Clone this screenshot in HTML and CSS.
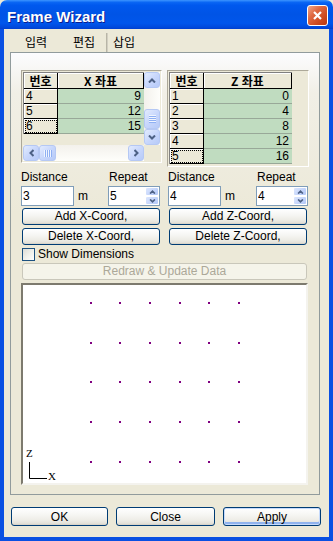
FILE: index.html
```html
<!DOCTYPE html>
<html lang="ko">

<head>
    <meta charset="UTF-8">
    <meta name="viewport" content="width=device-width, initial-scale=1.0">
    <title>Frame Wizard</title>
    <link rel="stylesheet" href="styles.css">
</head>

<body>
    <svg class="defs" width="0" height="0">
        <symbol id="chev-up" viewBox="0 0 8 5"><path d="M1 4.5L4 1.5L7 4.5" fill="none" stroke="#4D6185" stroke-width="2"/></symbol>
        <symbol id="chev-down" viewBox="0 0 8 5"><path d="M1 0.5L4 3.5L7 0.5" fill="none" stroke="#4D6185" stroke-width="2"/></symbol>
        <symbol id="chev-left" viewBox="0 0 5 8"><path d="M4.5 1L1.5 4L4.5 7" fill="none" stroke="#4D6185" stroke-width="2"/></symbol>
        <symbol id="chev-right" viewBox="0 0 5 8"><path d="M0.5 1L3.5 4L0.5 7" fill="none" stroke="#4D6185" stroke-width="2"/></symbol>
    </svg>

    <div class="window">
        <div class="titlebar">
            <span class="title">Frame Wizard</span>
            <button class="close-btn">
                <svg width="13" height="13" viewBox="0 0 13 13"><path d="M3 3L10 10M10 3L3 10" stroke="#fff" stroke-width="2.2"/></svg>
            </button>
        </div>

        <div class="frame">
            <div class="tabs">
                <div class="tab tab-input">입력</div>
                <div class="tab tab-edit">편집</div>
                <div class="tab tab-insert">삽입</div>
            </div>

            <div class="panel">
                <div class="grids">
                    <!-- X coordinates -->
                    <div class="grid-box grid-x">
                        <div class="grid-main">
                            <div class="grid-view">
                                <div class="grid">
                                    <div class="g-row g-head"><div class="c-no">번호</div><div class="c-val c-val-x">X 좌표</div></div>
                                    <div class="g-row"><div class="c-no">4</div><div class="c-val c-val-x">9</div></div>
                                    <div class="g-row"><div class="c-no">5</div><div class="c-val c-val-x">12</div></div>
                                    <div class="g-row"><div class="c-no focus">6</div><div class="c-val c-val-x">15</div></div>
                                </div>
                            </div>
                            <div class="hscroll">
                                <span class="sb-btn"><svg width="5" height="8"><use href="#chev-left"/></svg></span>
                                <span class="sb-thumb-h"><span class="grip-h"></span></span>
                                <span class="sb-track"></span>
                                <span class="sb-btn"><svg width="5" height="8"><use href="#chev-right"/></svg></span>
                            </div>
                        </div>
                        <div class="grid-side">
                            <div class="vscroll">
                                <span class="sb-btn"><svg width="8" height="5"><use href="#chev-up"/></svg></span>
                                <span class="sb-track"></span>
                                <span class="sb-thumb-v"><span class="grip-v"></span></span>
                                <span class="sb-btn"><svg width="8" height="5"><use href="#chev-down"/></svg></span>
                            </div>
                            <div class="corner"></div>
                        </div>
                    </div>

                    <!-- Z coordinates -->
                    <div class="grid-box grid-z">
                        <div class="grid">
                            <div class="g-row g-head"><div class="c-no">번호</div><div class="c-val c-val-z">Z 좌표</div></div>
                            <div class="g-row"><div class="c-no">1</div><div class="c-val c-val-z">0</div></div>
                            <div class="g-row"><div class="c-no">2</div><div class="c-val c-val-z">4</div></div>
                            <div class="g-row"><div class="c-no">3</div><div class="c-val c-val-z">8</div></div>
                            <div class="g-row"><div class="c-no">4</div><div class="c-val c-val-z">12</div></div>
                            <div class="g-row"><div class="c-no focus">5</div><div class="c-val c-val-z">16</div></div>
                        </div>
                    </div>
                </div>

                <div class="controls">
                    <div class="col">
                        <div class="field-labels"><span>Distance</span><span class="lbl-repeat">Repeat</span></div>
                        <div class="field-row">
                            <input class="txt" type="text" value="3">
                            <span class="unit">m</span>
                            <div class="spin">
                                <input class="spin-input" type="text" value="5">
                                <div class="spin-btns">
                                    <span class="spin-btn"><svg width="7" height="4"><use href="#chev-up"/></svg></span>
                                    <span class="spin-btn"><svg width="7" height="4"><use href="#chev-down"/></svg></span>
                                </div>
                            </div>
                        </div>
                        <button class="btn btn-wide">Add X-Coord,</button>
                        <button class="btn btn-wide">Delete X-Coord,</button>
                    </div>
                    <div class="col">
                        <div class="field-labels"><span>Distance</span><span class="lbl-repeat">Repeat</span></div>
                        <div class="field-row">
                            <input class="txt" type="text" value="4">
                            <span class="unit">m</span>
                            <div class="spin">
                                <input class="spin-input" type="text" value="4">
                                <div class="spin-btns">
                                    <span class="spin-btn"><svg width="7" height="4"><use href="#chev-up"/></svg></span>
                                    <span class="spin-btn"><svg width="7" height="4"><use href="#chev-down"/></svg></span>
                                </div>
                            </div>
                        </div>
                        <button class="btn btn-wide">Add Z-Coord,</button>
                        <button class="btn btn-wide">Delete Z-Coord,</button>
                    </div>
                </div>

                <label class="check-row"><span class="checkbox"></span>Show Dimensions</label>

                <button class="btn btn-redraw" disabled>Redraw &amp; Update Data</button>

                <div class="canvas">
                    <svg class="plot" width="283" height="198" viewBox="0 0 283 198">
                        <defs>
                            <g id="dot-col" fill="#800080">
                                <rect x="0" y="17" width="2" height="2"/>
                                <rect x="0" y="57" width="2" height="2"/>
                                <rect x="0" y="96" width="2" height="2"/>
                                <rect x="0" y="136" width="2" height="2"/>
                                <rect x="0" y="176" width="2" height="2"/>
                            </g>
                        </defs>
                        <use href="#dot-col" x="67"/>
                        <use href="#dot-col" x="96"/>
                        <use href="#dot-col" x="126"/>
                        <use href="#dot-col" x="156"/>
                        <use href="#dot-col" x="185"/>
                        <use href="#dot-col" x="215"/>
                        <path d="M6.5 177V193.5H24" fill="none" stroke="#000" stroke-width="1"/>
                        <text x="3" y="172" class="axis">Z</text>
                        <text x="25" y="195" class="axis">X</text>
                    </svg>
                </div>
            </div>

            <div class="footer">
                <button class="btn btn-ok">OK</button>
                <button class="btn btn-close">Close</button>
                <button class="btn btn-apply">Apply</button>
            </div>
        </div>
    </div>
</body>

</html>
```

FILE: styles.css
```css
body {
    margin: 0;
    font-family: "Liberation Sans", "Noto Sans CJK KR", sans-serif;
    font-size: 12px;
    color: #000;
    background: #ECE9D8;
}

.defs {
    position: absolute;
}

.window {
    width: 333px;
    height: 541px;
    display: flex;
    flex-direction: column;
}

/* title bar */
.titlebar {
    height: 29px;
    flex: none;
    box-sizing: border-box;
    display: flex;
    align-items: center;
    padding: 1px 5px 0 7px;
    border-radius: 7px 7px 0 0;
    background: linear-gradient(180deg, #3D95FF 0%, #0A66F4 8%, #0058EE 18%, #0054E6 50%, #0056EC 80%, #0049DC 94%, #003FCF 100%);
}

.title {
    flex: 1;
    color: #fff;
    font-weight: bold;
    font-size: 15px;
    padding-top: 2px;
    text-shadow: 1px 1px #0C1E8E;
}

.close-btn {
    width: 21px;
    height: 21px;
    padding: 0;
    margin-top: 1px;
    display: flex;
    align-items: center;
    justify-content: center;
    border: 1px solid #fff;
    border-radius: 3px;
    background: linear-gradient(135deg, #F0A88C 0%, #E06A43 35%, #CD4A20 70%, #B9380F 100%);
}

/* window frame + client */
.frame {
    flex: 1;
    display: flex;
    flex-direction: column;
    background: #ECE9D8;
    border: 4px solid #0A50E2;
    border-top: 0;
}

.tabs {
    display: flex;
    height: 23px;
    margin-left: 6px;
}

.tab {
    display: flex;
    align-items: center;
    justify-content: center;
    font-family: "Noto Sans CJK KR", sans-serif;
    font-size: 12px;
    padding-top: 1px;
}

.tab-input {
    width: 52px;
}

.tab-edit {
    width: 44px;
}

.tab-insert {
    width: 34px;
    margin-top: 4px;
    padding-top: 0;
    padding-bottom: 3px;
    border-left: 1px solid #B8B5A6;
    box-shadow: inset 1px 0 #D2CFC2;
}

.panel {
    height: 443px;
    margin: 0 9px 0 6px;
    box-sizing: border-box;
    border: 1px solid #919B9C;
    padding: 17px 10px 0 10px;
    background: linear-gradient(180deg, #FCFCFE 0, #F1EFE6 40px, #ECE9D8 160px);
}

/* coordinate grids */
.grids {
    display: flex;
    align-items: flex-start;
    gap: 5px;
    height: 97px;
    margin-bottom: 3px;
}

.grid-box {
    box-sizing: border-box;
    border: 1px solid;
    border-color: #ACA899 #fff #fff #ACA899;
    padding: 1px;
    background: #ECE9D8;
}

.grid-x {
    width: 141px;
    height: 93px;
    display: flex;
}

.grid-z {
    width: 145px;
    height: 97px;
}

.grid-main {
    width: 121px;
    display: flex;
    flex-direction: column;
}

.grid-view {
    height: 73px;
    overflow: hidden;
}

.grid {
    display: inline-block;
    border-top: 1px solid #808080;
    border-left: 1px solid #808080;
}

.g-row {
    display: flex;
    height: 15px;
}

.g-head {
    height: 16px;
    font-family: "Noto Sans CJK KR", sans-serif;
    font-weight: bold;
}

.c-no {
    width: 34px;
    box-sizing: border-box;
    padding-left: 2px;
    line-height: 14px;
    background: #ECE9D8;
    border-right: 1px solid #000;
    border-bottom: 1px solid #000;
    box-shadow: inset 1px 1px #fff;
}

.c-val {
    box-sizing: border-box;
    text-align: right;
    padding-right: 3px;
    line-height: 14px;
    background: #C0DCC0;
    border-bottom: 1px solid #98A898;
}

.c-val-x {
    width: 86px;
}

.c-val-z {
    width: 88px;
}

.g-head .c-no,
.g-head .c-val {
    padding: 0;
    text-align: center;
    line-height: 15px;
    background: #ECE9D8;
    border-right: 1px solid #000;
    border-bottom: 1px solid #000;
    box-shadow: inset 1px 1px #fff;
}

.focus {
    outline: 1px dotted #000;
    outline-offset: -2px;
}

/* scrollbars */
.grid-side {
    width: 16px;
    display: flex;
    flex-direction: column;
}

.vscroll {
    height: 73px;
    display: flex;
    flex-direction: column;
    background: linear-gradient(90deg, #F3F1EC, #FEFEFB);
}

.hscroll {
    height: 16px;
    display: flex;
    background: linear-gradient(180deg, #F3F1EC, #FEFEFB);
}

.corner {
    height: 16px;
    background: #ECE9D8;
}

.sb-track {
    flex: 1;
}

.sb-btn,
.sb-thumb-v,
.sb-thumb-h {
    flex: none;
    width: 16px;
    height: 16px;
    box-sizing: border-box;
    display: flex;
    align-items: center;
    justify-content: center;
    border: 1px solid #B5C8F4;
    border-radius: 3px;
    background: linear-gradient(135deg, #E2EBFE 0%, #C8D7FC 50%, #B6CAF8 100%);
}

.sb-thumb-v {
    height: 20px;
}

.sb-thumb-h {
    width: 17px;
}

.grip-v {
    width: 7px;
    height: 8px;
    background: repeating-linear-gradient(180deg, #F0F5FF 0 1px, #8FB0F3 1px 2px);
}

.grip-h {
    width: 8px;
    height: 7px;
    background: repeating-linear-gradient(90deg, #F0F5FF 0 1px, #8FB0F3 1px 2px);
}

/* distance / repeat inputs */
.controls {
    display: grid;
    grid-template-columns: 139px 140px;
    column-gap: 8px;
}

.col {
    display: flex;
    flex-direction: column;
}

.field-labels {
    display: flex;
    height: 14px;
    line-height: 14px;
    margin-bottom: 2px;
}

.lbl-repeat {
    width: 51px;
    margin-left: auto;
    padding-left: 1px;
}

.field-row {
    display: flex;
    align-items: center;
    height: 20px;
    margin-bottom: 2px;
}

.txt {
    width: 53px;
    height: 20px;
    box-sizing: border-box;
    margin: 0;
    padding: 0 1px;
    border: 1px solid #7F9DB9;
    font-family: "Liberation Sans", sans-serif;
    font-size: 12px;
}

.unit {
    margin-left: 4px;
}

.spin {
    width: 52px;
    height: 20px;
    box-sizing: border-box;
    margin-left: auto;
    display: flex;
    border: 1px solid #7F9DB9;
    background: #fff;
}

.spin-input {
    width: 34px;
    margin: 0;
    padding: 0 1px;
    border: 0;
    font-family: "Liberation Sans", sans-serif;
    font-size: 12px;
}

.spin-btns {
    width: 16px;
    display: flex;
    flex-direction: column;
}

.spin-btn {
    flex: 1;
    display: flex;
    align-items: center;
    justify-content: center;
    border: 1px solid #fff;
    border-radius: 2px;
    background: linear-gradient(135deg, #DCE6FD 0%, #C3D4FB 60%, #B3C8F7 100%);
}

/* buttons */
.btn {
    display: block;
    box-sizing: border-box;
    margin: 0;
    padding: 0;
    border: 1px solid #003C74;
    border-radius: 3px;
    font-family: "Liberation Sans", sans-serif;
    font-size: 12px;
    color: #000;
    background: linear-gradient(180deg, #FFFFFF 0%, #F6F6F3 40%, #EEEDE7 70%, #E4E2DA 90%, #D4CEC2 100%);
}

.btn-wide {
    width: 138px;
    height: 17px;
    margin-left: 1px;
    margin-bottom: 3px;
    line-height: 15px;
}

.btn-wide:last-child {
    margin-bottom: 2px;
}

.check-row {
    display: flex;
    align-items: center;
    height: 14px;
    margin-bottom: 2px;
    padding-left: 1px;
}

.checkbox {
    width: 13px;
    height: 13px;
    box-sizing: border-box;
    margin-right: 3px;
    border: 1px solid #1C5180;
    background: linear-gradient(135deg, #DCDCD7 0%, #F0F0EA 50%, #FFFFFF 100%);
}

.btn-redraw {
    width: 285px;
    height: 17px;
    margin: 0 0 3px 1px;
    line-height: 15px;
    border-color: #C9C7BA;
    color: #ACA899;
    background: #F5F4EA;
}

/* preview canvas */
.canvas {
    width: 287px;
    height: 202px;
    box-sizing: border-box;
    border: 2px solid;
    border-color: #7D7A6E #F4F3EE #F4F3EE #7D7A6E;
    background: #fff;
}

.plot {
    display: block;
}

.axis {
    font-family: "Liberation Serif", serif;
    font-size: 11px;
}

/* dialog buttons */
.footer {
    display: flex;
    gap: 8px;
    margin: 12px 0 0 7px;
}

.footer .btn {
    height: 19px;
}

.btn-ok {
    width: 97px;
}

.btn-close {
    width: 99px;
}

.btn-apply {
    width: 98px;
    box-shadow: inset 0 0 0 1px #C6DAFB, inset 0 -2px 0 1px #90B3EE;
}
```
